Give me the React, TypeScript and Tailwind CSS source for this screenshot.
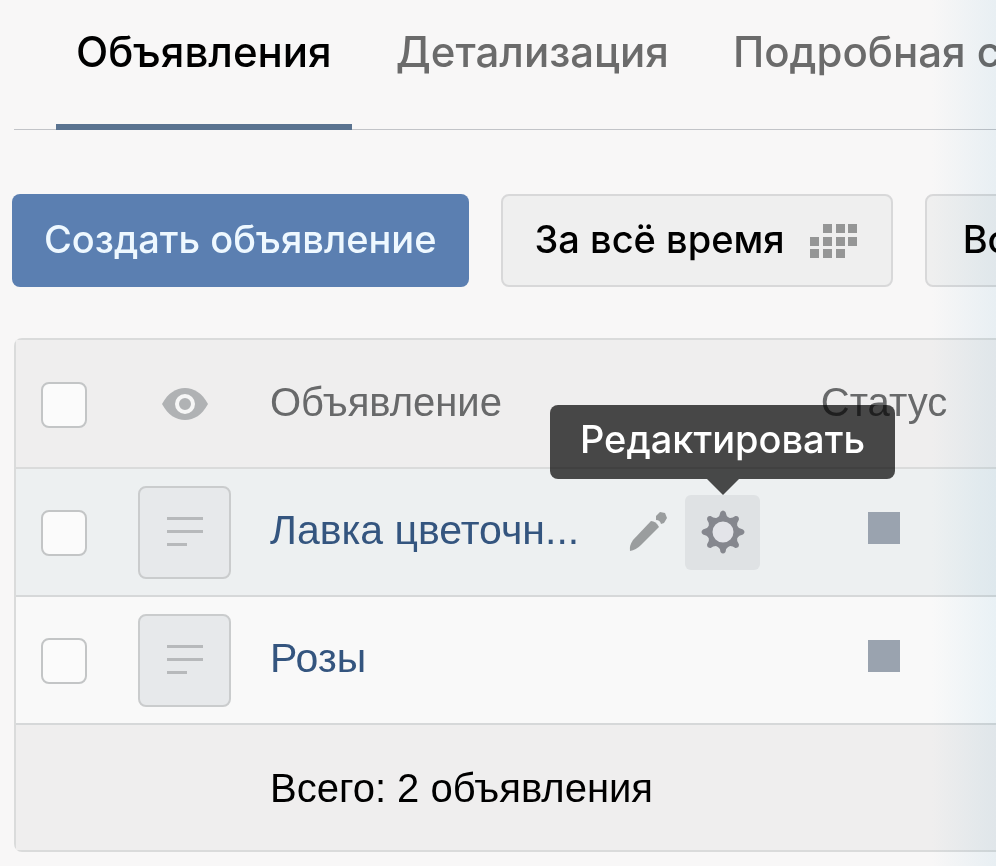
import { useState } from "react";

const tabs = ["Объявления", "Детализация", "Подробная статистика"];

const ads = [
  { id: 1, name: "Лавка цветочн...", hovered: true },
  { id: 2, name: "Розы", hovered: false },
];

const Checkbox: React.FC<{ label: string }> = ({ label }) => (
  <input
    type="checkbox"
    aria-label={label}
    className="block size-[46px] appearance-none rounded-lg border-2 border-[#c3c5c6] bg-[#fbfbfb] checked:bg-[#5b7fb1]"
  />
);

const CalendarIcon = () => (
  <svg width="50" height="36" viewBox="0 0 50 36" fill="#959696" aria-hidden="true">
    <path d="M14 1h9v9h-9zM27 1h9v9h-9zM39 1h9v9h-9zM1 14h9v9H1zM14 14h9v9h-9zM27 14h9v9h-9zM39 14h9v9h-9zM1 26h9v9H1zM14 26h9v9h-9zM27 26h9v9h-9z" />
  </svg>
);

const EyeIcon = () => (
  <svg width="46" height="32" viewBox="0 0 46 32" aria-hidden="true">
    <path d="M0 16C6 5 14 0 23 0s17 5 23 16c-6 11-14 16-23 16S6 27 0 16z" fill="#b0b2b4" />
    <circle cx="23" cy="16" r="8" fill="#b0b2b4" stroke="#f6f6f6" strokeWidth="4" />
  </svg>
);

const PencilIcon = () => (
  <svg width="40" height="40" viewBox="0 0 40 40" fill="#9a9d9e" aria-hidden="true">
    <path d="M1 39Q0 34 4 28L22 9Q27 9 30 15L12 33Q7 38 1 39Z" />
    <path d="M27 4L31 0L36 1L38 6L35 11L32 12Q31 8 27 8Z" />
  </svg>
);

const GearIcon = () => (
  <svg width="44" height="44" viewBox="-22 -22 44 44" fill="#85878e" aria-hidden="true">
    {[0, 45, 90, 135, 180, 225, 270, 315].map((angle) => (
      <path
        key={angle}
        d="M-6-14Q-3-16-2.5-20Q0-23 2.5-20Q3-16 6-14Z"
        transform={`rotate(${angle})`}
      />
    ))}
    <circle r="13" fill="#e3e4e9" stroke="#85878e" strokeWidth="5" />
  </svg>
);

const AdThumb = () => (
  <div className="flex size-[93px] items-center justify-center rounded-lg border-2 border-[#cacccd] bg-[#e7e9eb]">
    <svg width="36" height="32" viewBox="0 0 36 32" fill="#b7b9bb" aria-hidden="true">
      <path d="M0 1h36v3H0zM0 14h36v3H0zM0 27h20v3H0z" />
    </svg>
  </div>
);

const App: React.FC = () => {
  const [activeTab, setActiveTab] = useState(0);

  return (
    <div className="relative min-h-screen overflow-hidden bg-[#f8f7f7] pl-3 font-['Inter','Liberation_Sans',sans-serif]">
      <nav className="ml-0.5 flex h-[130px] gap-6 border-b border-[#c2c4c8] pl-[42px] text-[42px] leading-12 font-medium">
        {tabs.map((tab, i) => (
          <button
            key={tab}
            type="button"
            onClick={() => setActiveTab(i)}
            className={
              i === activeTab
                ? "-mb-px shrink-0 border-b-6 border-[#5a7390] px-5 pb-5 text-black"
                : "-mb-px shrink-0 border-b-6 border-transparent px-5 pb-5 text-[#6b6b6b]"
            }
          >
            {tab}
          </button>
        ))}
      </nav>

      <div className="mt-16 flex gap-8 text-[38px] leading-12 font-medium">
        <button
          type="button"
          className="h-[93px] shrink-0 rounded-lg bg-[#5b7fb1] px-8 pb-1 text-[#eef8ff]"
        >
          Создать объявление
        </button>
        <button
          type="button"
          className="flex h-[93px] shrink-0 items-center gap-6 rounded-lg border-2 border-[#d8d8d9] bg-[#efefef] px-8 text-black"
        >
          <span className="pb-1">За всё время</span>
          <CalendarIcon />
        </button>
        <button
          type="button"
          className="h-[93px] shrink-0 rounded-lg border-2 border-[#d8d8d9] bg-[#efefef] px-9 pb-1 text-black"
        >
          Все объявления
        </button>
      </div>

      <div className="mt-[51px] ml-0.5 rounded-l-lg border-y-2 border-l-2 border-[#dadbdb] font-['Liberation_Sans',Arial,sans-serif] text-[40px] leading-12">
        <table className="w-full table-fixed border-collapse text-left">
          <colgroup>
            <col className="w-[122px]" />
            <col className="w-[132px]" />
            <col />
            <col className="w-[224px]" />
          </colgroup>
          <thead className="bg-[#efeeee] text-[#68696a]">
            <tr className="h-32 border-b-2 border-[#dadbdb]">
              <th className="pt-0.5 pl-[25px]">
                <Checkbox label="Выбрать все" />
              </th>
              <th className="pl-6" aria-label="Просмотр">
                <EyeIcon />
              </th>
              <th className="pb-1 font-normal">Объявление</th>
              <th className="pb-1 text-center font-normal">Статус</th>
            </tr>
          </thead>
          <tbody>
            {ads.map((ad) => (
              <tr
                key={ad.id}
                className={
                  ad.hovered
                    ? "h-32 border-b-2 border-[#d6d8d9] bg-[#edf0f1]"
                    : "h-32 border-b-2 border-[#d6d8d9] bg-[#f9f9f9]"
                }
              >
                <td className="pt-0.5 pl-[25px]">
                  <Checkbox label={ad.name} />
                </td>
                <td>
                  <AdThumb />
                </td>
                <td>
                  <div className="flex items-center pr-3">
                    <a href="#" className="flex-1 pb-1 text-[41px] whitespace-nowrap text-[#34557f]">
                      {ad.name}
                    </a>
                    {ad.hovered && (
                      <>
                        <button type="button" aria-label="Изменить" className="mr-4">
                          <PencilIcon />
                        </button>
                        <div className="relative flex flex-col items-center">
                          <button
                            type="button"
                            aria-label="Редактировать"
                            className="flex size-[75px] items-center justify-center rounded-md bg-[#dfe2e4]"
                          >
                            <GearIcon />
                          </button>
                          <div
                            role="tooltip"
                            className="absolute bottom-full flex flex-col items-center font-['Inter','Liberation_Sans',sans-serif] text-[38px] font-medium text-white"
                          >
                            <span className="rounded-lg bg-black/70 px-[30px] pt-2.5 pb-4">
                              Редактировать
                            </span>
                            <svg width="32" height="16" viewBox="0 0 32 16" aria-hidden="true">
                              <path d="M0 0h32L16 16z" fill="#000" fillOpacity="0.7" />
                            </svg>
                          </div>
                        </div>
                      </>
                    )}
                  </div>
                </td>
                <td className="pb-2">
                  <div className="mx-auto size-8 bg-[#9aa3af]" />
                </td>
              </tr>
            ))}
          </tbody>
          <tfoot className="bg-[#efeeee] text-black">
            <tr className="h-[126px]">
              <td colSpan={2} />
              <td colSpan={2}>Всего: 2 объявления</td>
            </tr>
          </tfoot>
        </table>
      </div>

      <div className="pointer-events-none absolute inset-y-0 right-0 w-16 bg-linear-to-r from-white to-[#eff7fb] mix-blend-multiply" />
    </div>
  );
};

export default App;
